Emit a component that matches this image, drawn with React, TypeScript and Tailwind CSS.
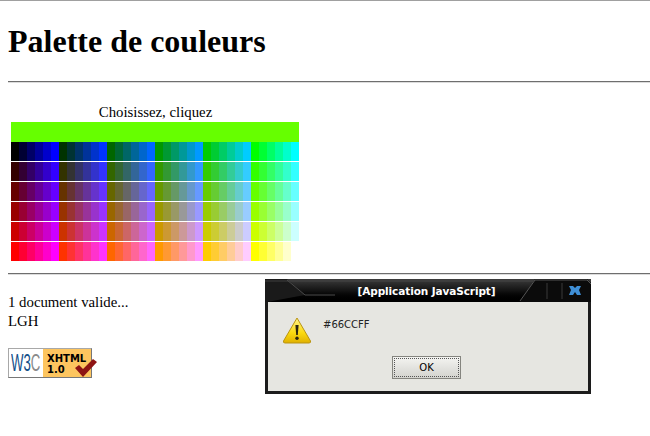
import React from 'react';

const levels = ['00', '33', '66', '99', 'CC', 'FF'];

const Palette: React.FC = () => (
  <div className="ml-[3px] w-[288px]">
    <p className="h-[19px] pl-[1px] text-center leading-[19px]">Choisissez, cliquez</p>
    <div className="h-[20px] bg-[#66FF00]"></div>
    {levels.map((r) => (
      <div key={r} className="flex h-[20px] border-b border-white">
        {levels.map((g) =>
          levels.map((b) => (
            <div key={g + b} className="w-[8px]" style={{ backgroundColor: `#${r}${g}${b}` }}></div>
          ))
        )}
      </div>
    ))}
  </div>
);

const Rule: React.FC = () => <div className="-mr-2 h-[2px] border-t border-b border-t-[#6e6e6e] border-b-[#dcdcdc]"></div>;

const W3cBadge: React.FC = () => (
  <div className="relative mt-[17px] flex h-[30px] w-[84px] border border-[#a8a8a8] border-r-[#777] border-b-[#777]">
    <div className="flex w-[34px] items-center justify-center overflow-hidden bg-white font-['Liberation_Sans',sans-serif] text-[24px] leading-none text-[#14508a]">
      <span className="scale-x-[0.55] whitespace-nowrap">
        W3<span className="text-[#8a8a8a]">C</span>
      </span>
    </div>
    <div className="flex-1 bg-[#fdc55f] pl-[4px] pt-[4px] font-['DejaVu_Sans',sans-serif] text-[10px] leading-[11px] font-bold text-black">
      <div>XHTML</div>
      <div>1.0</div>
    </div>
    <svg className="absolute left-[66px] top-[10px]" width="22" height="18" viewBox="0 0 22 18">
      <path d="M0 9 L4 6 L8 10 L18 0 L22 3 L8 18 Z" fill="#8e1414" />
    </svg>
  </div>
);

const WarningIcon: React.FC = () => (
  <svg width="30" height="28" viewBox="0 0 30 28">
    <defs>
      <linearGradient id="warn" x1="0" y1="0" x2="0" y2="1">
        <stop offset="0" stopColor="#fff38a" />
        <stop offset="0.6" stopColor="#fbd90e" />
        <stop offset="1" stopColor="#e0b000" />
      </linearGradient>
    </defs>
    <path d="M15 1 L28.5 24 Q29 26 27 26 L3 26 Q1 26 1.5 24 Z" fill="url(#warn)" stroke="#b99412" strokeWidth="1" strokeLinejoin="round" />
    <path d="M13.4 8 L16.6 8 L15.8 18 L14.2 18 Z" fill="#2a2410" />
    <circle cx="15" cy="21.2" r="1.7" fill="#2a2410" />
  </svg>
);

const AlertDialog: React.FC = () => (
  <div className="absolute left-[265px] top-[278px] flex h-[115px] w-[326px] flex-col border-x-[3px] border-b-[3px] border-[#1c1c1c] bg-[#e6e6e1] font-['DejaVu_Sans',sans-serif]">
    <div className="relative -mx-[3px] flex h-[23px] items-center justify-center bg-gradient-to-b from-[#3c3c3c] via-[#141414] to-black pt-[3px] text-[10.5px] font-bold text-white">
      <svg className="absolute left-0 top-0" width="326" height="23" viewBox="0 0 326 23">
        <path d="M0 0 L22 0 L40 16 L2 23 L0 23 Z" fill="#1a1a1a" />
        <path d="M22 1 L40 16 L70 16" fill="none" stroke="#4a4a4a" strokeWidth="1" />
        <path d="M0 2 L326 2" stroke="#4e4e4e" strokeWidth="1" opacity="0.7" />
        <path d="M270 0 L322 0 L326 4 L326 23 L255 23 Z" fill="#0b0b0b" />
        <path d="M255 22 L270 1 L322 1 L326 5" fill="none" stroke="#555" strokeWidth="1" />
        <path d="M282 4 V20 M297 4 V20" stroke="#3a3a3a" strokeWidth="1" />
        <path d="M304 7 L308 7 L310 9 L312 7 L316 7 L314 11 L316 16 L312 16 L310 13 L308 16 L304 16 L306 11 Z" fill="#3f8fd6" />
      </svg>
      <span className="relative -ml-[3px] tracking-[-0.1px]">[Application JavaScript]</span>
    </div>
    <div className="flex flex-1 flex-col">
      <div className="flex pl-[14px] pt-[15px]">
        <WarningIcon />
        <span className="ml-[11px] mt-[1px] text-[10px] leading-[14px] text-[#222]">#66CCFF</span>
      </div>
      <button className="ml-[124px] mt-[11px] h-[23px] w-[69px] border border-[#85857f] bg-gradient-to-b from-[#f4f4f1] to-[#d3d3ce] p-px text-[10px] text-black">
        <span className="flex h-full items-center justify-center border border-dotted border-[#555]">OK</span>
      </button>
    </div>
  </div>
);

export default function App() {
  return (
    <div className="relative h-[436px] overflow-hidden border-t border-[#a0a0a0] bg-white px-2 font-['Liberation_Serif',serif] text-[14.8px] text-black">
      <h1 className="mt-[22px] mb-[21px] h-[37px] text-[32px] leading-[37px] font-bold">Palette de couleurs</h1>
      <Rule />
      <div className="mt-[20px]">
        <Palette />
      </div>
      <div className="mt-[11px]">
        <Rule />
      </div>
      <div className="mt-[18px] leading-[19px]">
        <p>1 document valide...</p>
        <p>LGH</p>
      </div>
      <W3cBadge />
      <AlertDialog />
    </div>
  );
}
